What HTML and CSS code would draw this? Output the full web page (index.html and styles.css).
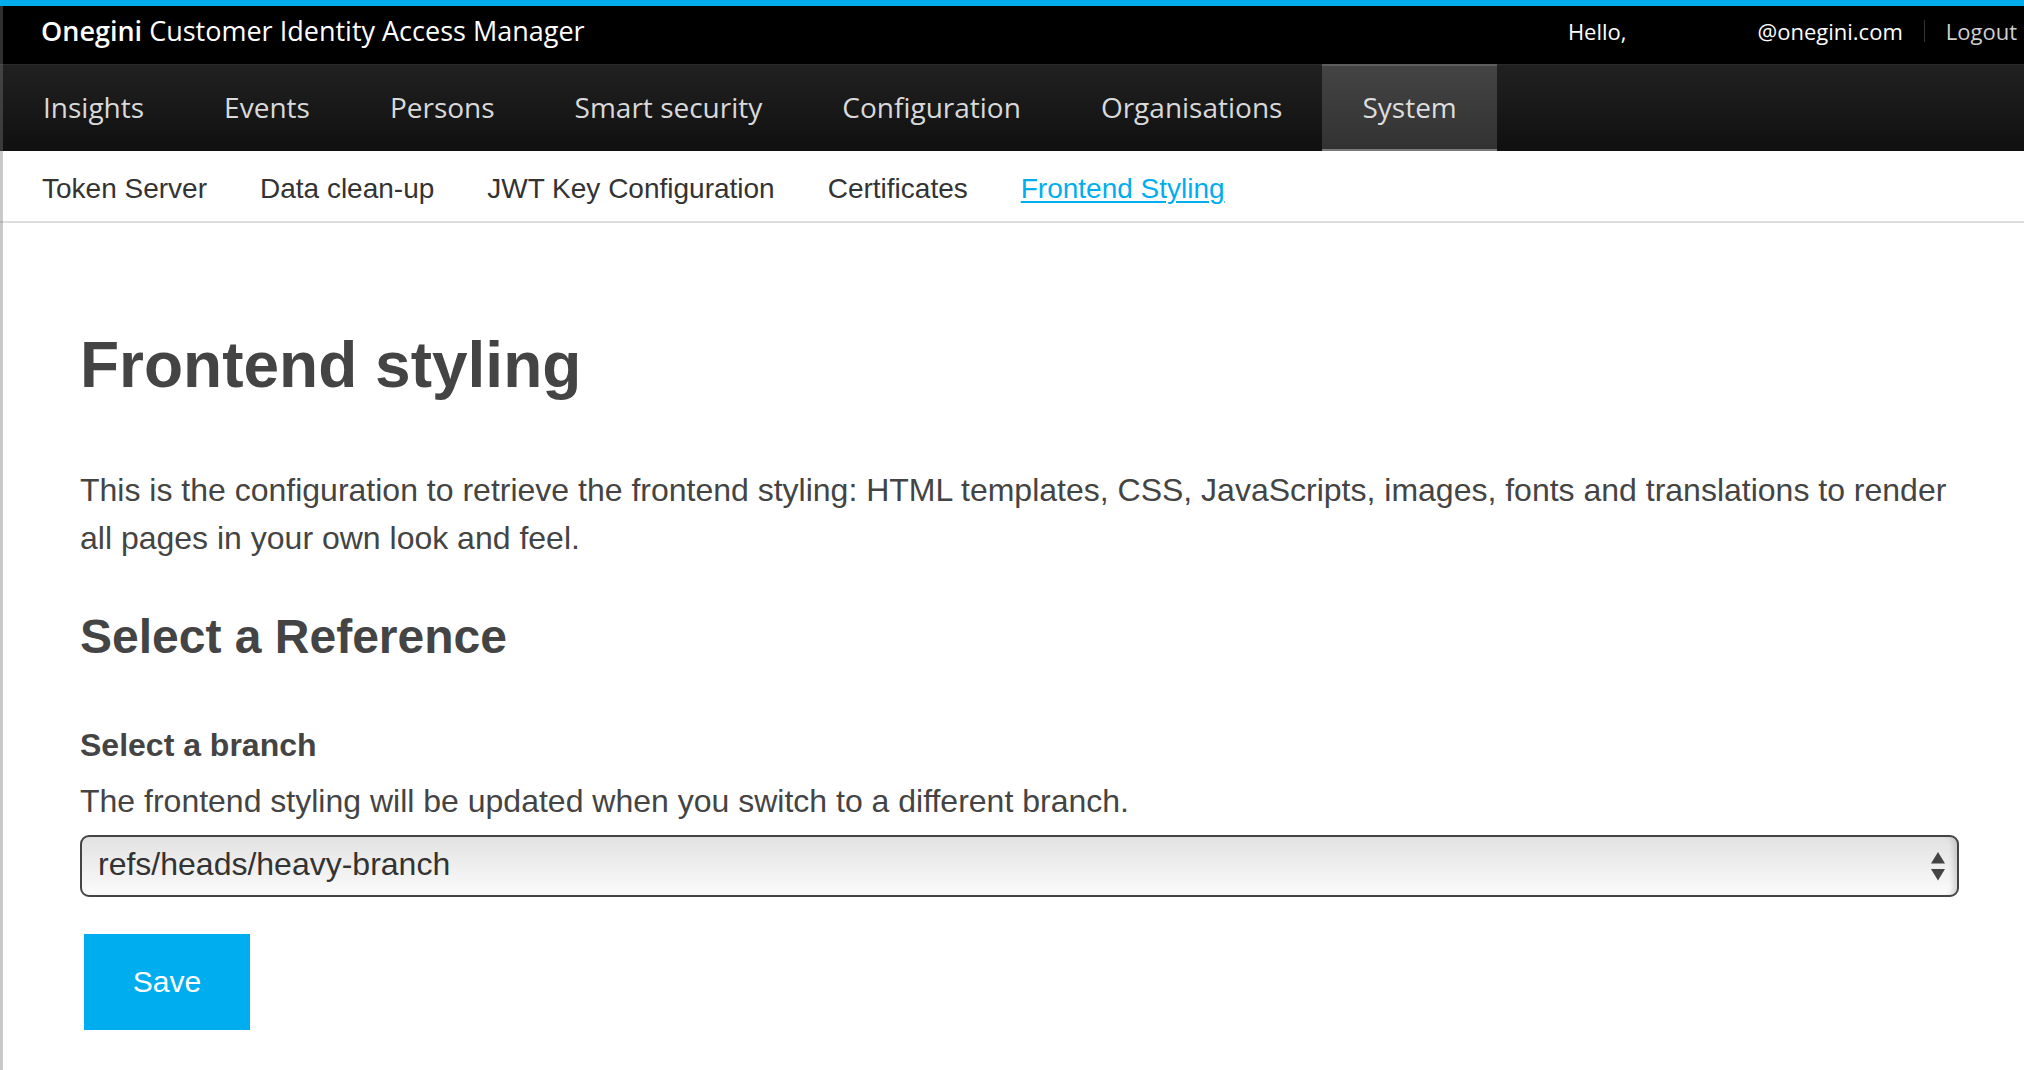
FILE: index.html
```html
<!DOCTYPE html>
<html lang="en">
<head>
<meta charset="utf-8">
<title>Frontend styling - Onegini Customer Identity Access Manager</title>
<link rel="stylesheet" href="styles.css">
</head>
<body>
<div class="window-edge"></div>
<header class="topbar">
  <div class="brand"><strong>Onegini</strong> Customer Identity Access Manager</div>
  <div class="account">
    <span class="greeting">Hello,</span>
    <span class="user-name"></span>
    <span class="email">@onegini.com</span>
    <a class="logout" href="#">Logout</a>
  </div>
</header>
<nav class="main-nav">
  <ul>
    <li><a href="#">Insights</a></li>
    <li><a href="#">Events</a></li>
    <li><a href="#">Persons</a></li>
    <li><a href="#">Smart security</a></li>
    <li><a href="#">Configuration</a></li>
    <li><a href="#">Organisations</a></li>
    <li class="active"><a href="#">System</a></li>
  </ul>
</nav>
<nav class="sub-nav">
  <ul>
    <li><a href="#">Token Server</a></li>
    <li><a href="#">Data clean-up</a></li>
    <li><a href="#">JWT Key Configuration</a></li>
    <li><a href="#">Certificates</a></li>
    <li class="active"><a href="#">Frontend Styling</a></li>
  </ul>
</nav>
<main class="content">
  <h1>Frontend styling</h1>
  <p class="intro">This is the configuration to retrieve the frontend styling: HTML templates, CSS, JavaScripts, images, fonts and translations to render all pages in your own look and feel.</p>
  <h2>Select a Reference</h2>
  <form class="branch-form">
    <label class="field-label" for="branch">Select a branch</label>
    <p class="help">The frontend styling will be updated when you switch to a different branch.</p>
    <div class="select-wrap">
      <select id="branch" class="branch-select">
        <option>refs/heads/heavy-branch</option>
      </select>
      <svg class="select-arrows" width="14" height="29" viewBox="0 0 14 29" aria-hidden="true">
        <polygon points="0,11.5 7,0 14,11.5"/>
        <polygon points="0,17 14,17 7,28.5"/>
      </svg>
    </div>
    <button type="button" class="btn-save">Save</button>
  </form>
</main>
</body>
</html>
```

FILE: styles.css
```css
* {
  box-sizing: border-box;
}

html, body {
  margin: 0;
  padding: 0;
  background: #ffffff;
}

body {
  font-family: "Liberation Sans", Arial, Helvetica, sans-serif;
  color: #444444;
  min-height: 1070px;
}

.window-edge {
  position: fixed;
  top: 6px;
  left: 0;
  bottom: 0;
  width: 3px;
  background: rgba(120, 120, 120, 0.4);
  z-index: 10;
}

/* Top bar */
.topbar {
  height: 64px;
  border-top: 6px solid #02adee;
  background: #000000;
  display: flex;
  align-items: center;
  justify-content: space-between;
  padding: 0 7px 8px 41px;
  font-family: "Open Sans", sans-serif;
  color: #ffffff;
}

.brand {
  font-size: 27px;
  line-height: 36px;
  white-space: nowrap;
}

.brand strong {
  font-weight: 600;
}

.account {
  display: flex;
  align-items: center;
  font-size: 22px;
  line-height: 22px;
}

.greeting {
  color: #ffffff;
}

.user-name {
  display: inline-block;
  width: 131px;
}

.email {
  color: #ffffff;
  margin-right: 21px;
}

.logout {
  color: #cfcfcf;
  text-decoration: none;
  border-left: 1px solid #333333;
  padding-left: 21px;
}

/* Main navigation */
.main-nav {
  height: 87px;
  background: linear-gradient(to bottom, #212121, #101010);
  box-shadow: inset 0 1px 0 #2a2a2a;
  font-family: "Open Sans", sans-serif;
}

.main-nav ul {
  list-style: none;
  margin: 0 0 0 3px;
  padding: 0;
  display: flex;
  height: 100%;
}

.main-nav a {
  display: flex;
  align-items: center;
  height: 87px;
  padding: 0 40px 2px;
  font-size: 28px;
  color: #d9d9d9;
  text-decoration: none;
  border-top: 2px solid transparent;
  border-bottom: 2px solid transparent;
}

.main-nav .active a {
  background: linear-gradient(to bottom, #444444, #323232);
  border-top-color: #5e5e5e;
  border-bottom-color: #7a7a7a;
  color: #dddddd;
}

/* Sub navigation */
.sub-nav {
  height: 72px;
  border-bottom: 2px solid #dddddd;
  background: #ffffff;
}

.sub-nav ul {
  list-style: none;
  margin: 0;
  padding: 5px 0 0 42px;
  display: flex;
  align-items: center;
  gap: 53px;
  height: 100%;
}

.sub-nav a {
  font-size: 28px;
  line-height: 36px;
  color: #333333;
  text-decoration: none;
  white-space: nowrap;
}

.sub-nav .active a {
  color: #00aeef;
  text-decoration: underline;
  text-underline-offset: 3px;
  text-decoration-thickness: 2px;
}

/* Content */
.content {
  padding: 104px 65px 40px 80px;
}

.content h1 {
  margin: 0;
  font-size: 64px;
  line-height: 76px;
  font-weight: 700;
  color: #444444;
}

.intro {
  margin: 63px 0 0;
  font-size: 32px;
  line-height: 48px;
  color: #444444;
}

.content h2 {
  margin: 46px 0 0;
  font-size: 48px;
  line-height: 58px;
  font-weight: 700;
  color: #444444;
}

.field-label {
  display: block;
  margin-top: 59px;
  font-size: 32px;
  line-height: 40px;
  font-weight: 700;
  color: #444444;
}

.help {
  margin: 12px 0 0;
  font-size: 32px;
  line-height: 48px;
  color: #444444;
}

.select-wrap {
  position: relative;
  margin-top: 10px;
}

.branch-select {
  appearance: none;
  -webkit-appearance: none;
  display: block;
  width: 100%;
  height: 62px;
  margin: 0;
  padding: 0 40px 4px 16px;
  border: 2px solid #444444;
  border-radius: 9px;
  background: linear-gradient(to bottom, #e2e2e2, #fbfbfb);
  box-shadow: inset -7px 0 6px -4px rgba(0, 0, 0, 0.16);
  font-family: "Liberation Sans", Arial, Helvetica, sans-serif;
  font-size: 32px;
  color: #333333;
  outline: none;
}

.select-arrows {
  position: absolute;
  right: 14px;
  top: 17px;
  fill: #444444;
  pointer-events: none;
}

.btn-save {
  display: block;
  margin: 37px 0 0 4px;
  width: 166px;
  height: 96px;
  padding: 0;
  border: none;
  border-radius: 0;
  background: #00adef;
  color: #ffffff;
  font-family: "Liberation Sans", Arial, Helvetica, sans-serif;
  font-size: 30px;
  cursor: pointer;
}
```
